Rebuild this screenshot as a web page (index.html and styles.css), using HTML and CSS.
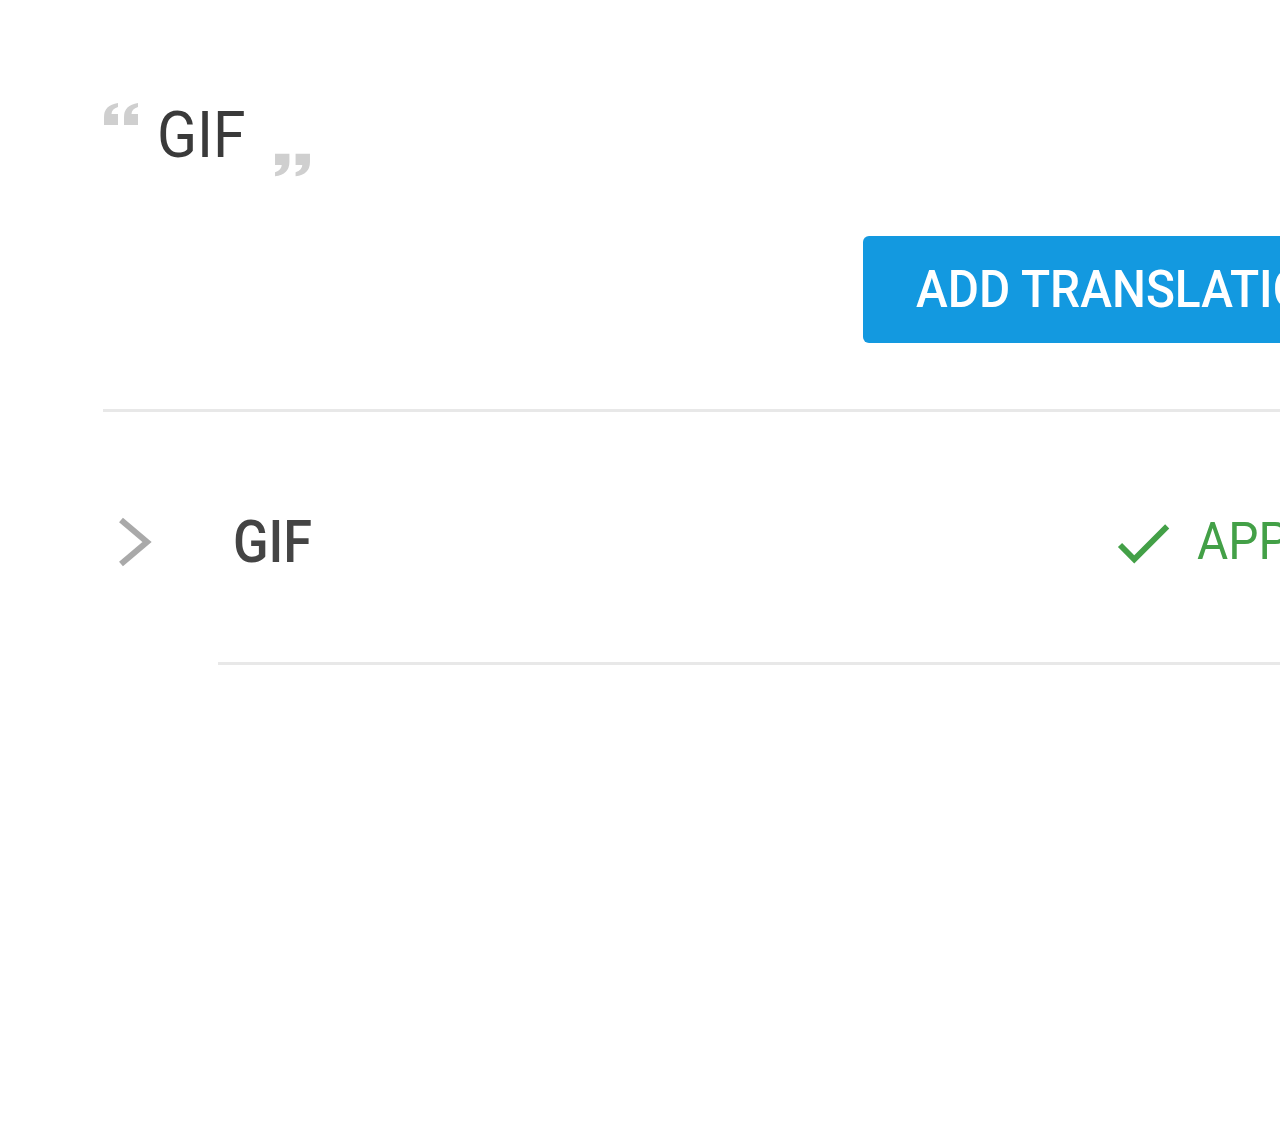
FILE: index.html
```html
<!DOCTYPE html>
<html lang="en">
<head>
    <meta charset="UTF-8">
    <meta name="viewport" content="width=device-width, initial-scale=1.0">
    <title>GIF</title>
    <link rel="stylesheet" href="styles.css">
</head>
<body>

    <div class="page">
        <div class="heading">
            <svg class="quote quote-open" width="36" height="22" viewBox="0 0 36 22">
                <path d="M1 22h14V11H8.5q0-5 6.5-7V0Q1 2 1 14z" fill="#cfcfcf"/>
                <path d="M21 22h14V11h-6.5q0-5 6.5-7V0Q21 2 21 14z" fill="#cfcfcf"/>
            </svg>
            <h1 class="title"><span class="narrow">GIF</span></h1>
            <svg class="quote quote-close" width="37" height="24" viewBox="0 0 36 22">
                <path d="M35 0H21v11h6.5q0 5-6.5 7v4q14-2 14-14z" fill="#cfcfcf"/>
                <path d="M15 0H1v11h6.5q0 5-6.5 7v4q14-2 14-14z" fill="#cfcfcf"/>
            </svg>
        </div>

        <div class="toolbar">
            <button class="btn"><span class="narrow">ADD TRANSLATION</span></button>
        </div>

        <div class="divider"></div>

        <div class="row">
            <div class="row-toggle">
                <svg width="36" height="52" viewBox="0 0 36 52">
                    <polyline points="4,4 30,26 4,48" fill="none" stroke="#a9a9a9" stroke-width="6"/>
                </svg>
            </div>
            <div class="row-body">
                <div class="row-title"><span class="narrow narrow-more">GIF</span></div>
                <div class="status">
                    <svg width="70" height="70" viewBox="0 0 24 24">
                        <path d="M9 16.17L4.83 12l-1.42 1.41L9 19 21 7l-1.41-1.41z" fill="#43a047"/>
                    </svg>
                    <span class="status-text narrow">APPROVED</span>
                </div>
            </div>
        </div>
    </div>

</body>
</html>
```

FILE: styles.css
```css
html, body {
    margin: 0;
    overflow: hidden;
}

body {
    background: #fff;
    font-family: Roboto, "Liberation Sans", sans-serif;
    width: 1280px;
    height: 1124px;
}

.page {
    padding: 103px 0 0 103px;
    width: 1600px;
}

/* the screenshot is a little squeezed sideways */
.narrow {
    display: inline-block;
    transform: scaleX(0.92);
    transform-origin: left center;
    white-space: nowrap;
}

.narrow-more {
    transform: scaleX(0.87);
}

.heading {
    display: flex;
    align-items: flex-start;
    height: 74px;
}

.title {
    margin: 1px 0 0 18px;
    font-size: 64px;
    font-weight: 400;
    line-height: 64px;
    color: #3a3a3a;
}

.quote-close {
    margin: 50px 0 0 21px;
}

.toolbar {
    margin-top: 59px;
    padding-left: 760px;
}

.btn {
    display: block;
    height: 107px;
    width: 640px;
    padding: 0 0 0 53px;
    border: none;
    border-radius: 6px;
    background: #1399e0;
    color: #fff;
    font-family: inherit;
    font-size: 52px;
    font-weight: 500;
    line-height: 107px;
    text-align: left;
    white-space: nowrap;
}

.divider {
    margin-top: 66px;
    border-top: 3px solid #e8e8e8;
}

.row {
    display: flex;
}

.row-toggle {
    width: 115px;
    display: flex;
    align-items: center;
    padding: 6px 0 0 14px;
    box-sizing: border-box;
}

.row-body {
    flex: 1;
    display: flex;
    align-items: center;
    height: 253px;
    padding-top: 10px;
    box-sizing: border-box;
    border-bottom: 3px solid #e8e8e8;
}

.row-title {
    flex: 0 0 875px;
    padding-left: 15px;
    font-size: 60px;
    font-weight: 500;
    line-height: 60px;
    color: #444;
}

.status {
    display: flex;
    align-items: center;
    color: #43a047;
}

.status svg {
    margin-top: 2px;
}

.status-text {
    margin-left: 19px;
    font-size: 52px;
    line-height: 52px;
}
```
